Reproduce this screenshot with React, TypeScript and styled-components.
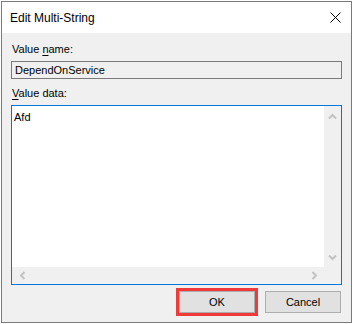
import React from "react";
import styled, { createGlobalStyle } from "styled-components";

const Global = createGlobalStyle`
  html, body { margin: 0; padding: 0; background: #ffffff; }
  body { font-family: "Liberation Sans", Arial, sans-serif; }
`;

const Win = styled.div`
  margin: 1px 0 0 1px;
  width: 351px;
  height: 322px;
  box-sizing: border-box;
  border: 1px solid #7a7a7a;
  background: #f0f0f0;
  display: flex;
  flex-direction: column;
`;

const TitleBar = styled.div`
  height: 31px;
  background: #ffffff;
  display: flex;
  align-items: center;
  justify-content: space-between;
  padding: 0 10px 0 8px;
  flex-shrink: 0;
`;

const Title = styled.span`
  font-size: 12px;
  color: #000;
  padding-top: 1px;
`;

const Body = styled.div`
  display: flex;
  flex-direction: column;
  padding: 8px 9px 0 9px;
  font-size: 11px;
`;

const Label = styled.div<{ $gapTop?: number }>`
  font-size: 11px;
  line-height: 16px;
  color: #000;
  padding-left: 1px;
  margin-top: ${(p) => p.$gapTop ?? 0}px;
  margin-bottom: 4px;
  u { text-decoration: underline; text-underline-offset: 2px; }
`;

const NameBox = styled.div`
  height: 18px;
  box-sizing: border-box;
  border: 1px solid #7a7a7a;
  background: #f0f0f0;
  font-size: 11px;
  line-height: 16px;
  padding-left: 3px;
  color: #000;
  width: 331px;
`;

const DataBox = styled.div`
  width: 331px;
  height: 180px;
  box-sizing: border-box;
  border: 1px solid #0078d7;
  background: #ffffff;
  display: grid;
  grid-template-columns: 1fr 17px;
  grid-template-rows: 1fr 17px;
`;

const TextArea = styled.div`
  font-size: 11px;
  line-height: 16px;
  padding: 3px 2px;
  color: #000;
`;

const VScroll = styled.div`
  background: #f0f0f0;
  display: flex;
  flex-direction: column;
  justify-content: space-between;
  align-items: center;
  padding: 6px 0 5px;
`;

const HScroll = styled.div`
  background: #f0f0f0;
  display: flex;
  justify-content: space-between;
  align-items: center;
  padding: 0 5px 0 6px;
`;

const Corner = styled.div`
  background: #f0f0f0;
`;

const Buttons = styled.div`
  display: flex;
  justify-content: flex-end;
  gap: 10px;
  margin-top: 6px;
  padding-right: 1px;
`;

const Btn = styled.button<{ $highlight?: boolean }>`
  width: 74px;
  height: 20px;
  box-sizing: content-box;
  background: #e1e1e1;
  border: 1px solid #adadad;
  font-family: inherit;
  font-size: 11px;
  color: #000;
  padding: 0;
  margin: 0;
  outline: ${(p) => (p.$highlight ? "3px solid #f03a3a" : "none")};
  outline-offset: 0px;
`;

const Chev = ({ dir }: { dir: "up" | "down" | "left" | "right" }) => {
  const rot = { up: 0, right: 90, down: 180, left: 270 }[dir];
  return (
    <svg width="9" height="9" viewBox="0 0 9 9" style={{ transform: `rotate(${rot}deg)` }}>
      <path d="M1 6.5 L4.5 3 L8 6.5" fill="none" stroke="#c2c2c2" strokeWidth="2" />
    </svg>
  );
};

export default function App() {
  return (
    <>
      <Global />
      <Win>
        <TitleBar>
          <Title>Edit Multi-String</Title>
          <svg width="11" height="11" viewBox="0 0 11 11">
            <path d="M0.5 0.5 L10.5 10.5 M10.5 0.5 L0.5 10.5" stroke="#000" strokeWidth="1" />
          </svg>
        </TitleBar>
        <Body>
          <Label>
            Value <u>n</u>ame:
          </Label>
          <NameBox>DependOnService</NameBox>
          <Label $gapTop={6}>
            <u>V</u>alue data:
          </Label>
          <DataBox>
            <TextArea>Afd</TextArea>
            <VScroll>
              <Chev dir="up" />
              <Chev dir="down" />
            </VScroll>
            <HScroll>
              <Chev dir="left" />
              <Chev dir="right" />
            </HScroll>
            <Corner />
          </DataBox>
          <Buttons>
            <Btn $highlight>OK</Btn>
            <Btn>Cancel</Btn>
          </Buttons>
        </Body>
      </Win>
    </>
  );
}
